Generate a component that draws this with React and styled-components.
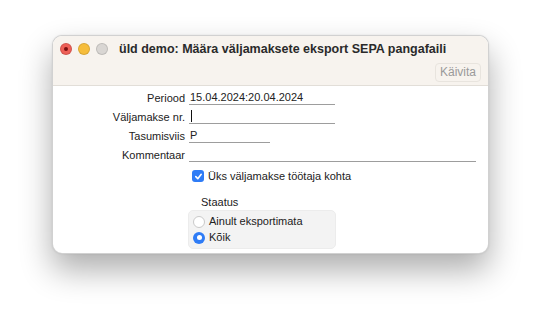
import styled, {createGlobalStyle} from 'styled-components'

const GlobalStyle = createGlobalStyle`
  body {
    margin: 0;
    background: #ffffff;
    font-family: 'Liberation Sans', Arial, sans-serif;
  }
`

const Page = styled.div`
  width: 542px;
  height: 324px;
  padding: 35px 0 0 52px;
  box-sizing: border-box;
`

const Window = styled.div`
  width: 437px;
  height: 219px;
  border-radius: 10px;
  border: 1px solid rgba(0, 0, 0, 0.18);
  box-sizing: border-box;
  overflow: hidden;
  background: #ffffff;
  box-shadow: 0 16px 32px rgba(0, 0, 0, 0.32), 0 0 2px rgba(0, 0, 0, 0.1);
  display: flex;
  flex-direction: column;
`

const Header = styled.div`
  height: 50px;
  background: #f7f3ee;
  border-bottom: 1px solid #e2ded8;
  display: flex;
  flex-direction: column;
  padding: 6px 7px 0 7px;
  box-sizing: border-box;
`

const TitleRow = styled.div`
  display: flex;
  align-items: center;
  gap: 6px;
  height: 14px;
`

const Light = styled.span`
  width: 12px;
  height: 12px;
  border-radius: 50%;
  background: ${p => p.color};
  border: 0.5px solid rgba(0, 0, 0, 0.12);
  box-sizing: border-box;
  display: flex;
  align-items: center;
  justify-content: center;
`

const Dot = styled.span`
  width: 4px;
  height: 4px;
  border-radius: 50%;
  background: #7a1010;
`

const Title = styled.span`
  margin-left: 5px;
  font-size: 12.5px;
  font-weight: bold;
  color: #2a2a2a;
`

const Toolbar = styled.div`
  display: flex;
  justify-content: flex-end;
  margin-top: 7px;
`

const ToolButton = styled.button`
  font-family: inherit;
  font-size: 12px;
  color: #9a9a9a;
  background: #f7f3ee;
  border: 1px solid #e8e4de;
  border-radius: 4px;
  padding: 2px 4px;
  height: 19px;
  line-height: 13px;
`

const Body = styled.div`
  flex: 1;
  padding-top: 5px;
  display: flex;
  flex-direction: column;
  font-size: 11px;
  color: #222;
`

const Form = styled.div`
  display: grid;
  grid-template-columns: 132px 1fr;
  column-gap: 4px;
  row-gap: 5px;
  padding-right: 13px;
  align-items: end;
`

const Label = styled.span`
  text-align: right;
  line-height: 14px;
`

const Field = styled.span`
  display: block;
  width: ${p => p.w || '100%'};
  border-bottom: 1px solid #9d9d9d;
  line-height: 13px;
  height: 13px;
  padding-left: 1px;
`

const Caret = styled.span`
  display: inline-block;
  width: 1px;
  height: 12px;
  background: #111;
  vertical-align: top;
  margin-left: 1px;
`

const Options = styled.div`
  padding-left: 135px;
  margin-top: 8px;
  display: flex;
  flex-direction: column;
`

const CheckRow = styled.div`
  display: flex;
  align-items: center;
  gap: 4px;
  padding-left: 4px;
`

const Check = styled.span`
  width: 12px;
  height: 12px;
  border-radius: 3px;
  background: #2f7cf6;
  display: flex;
  align-items: center;
  justify-content: center;
`

const GroupTitle = styled.div`
  margin: 14px 0 0 13px;
  line-height: 13px;
`

const Group = styled.div`
  width: 148px;
  margin-top: 1px;
  background: #f3f3f3;
  border: 1px solid #ececec;
  border-radius: 5px;
  box-sizing: border-box;
  padding: 4px 4px 4px 4px;
  display: flex;
  flex-direction: column;
  gap: 3px;
`

const RadioRow = styled.div`
  display: flex;
  align-items: center;
  gap: 4px;
  line-height: 13px;
`

const Radio = styled.span`
  width: 12px;
  height: 12px;
  border-radius: 50%;
  box-sizing: border-box;
  background: ${p => (p.on ? '#2f7cf6' : '#ffffff')};
  border: ${p => (p.on ? 'none' : '1px solid #c9c9c9')};
  display: flex;
  align-items: center;
  justify-content: center;
  &::after {
    content: '';
    display: ${p => (p.on ? 'block' : 'none')};
    width: 5px;
    height: 5px;
    border-radius: 50%;
    background: #fff;
  }
`

export default function App() {
  return (
    <>
      <GlobalStyle />
      <Page>
        <Window>
          <Header>
            <TitleRow>
              <Light color="#ee5f57">
                <Dot />
              </Light>
              <Light color="#f6bd3b" />
              <Light color="#d9d6d3" />
              <Title>üld demo: Määra väljamaksete eksport SEPA pangafaili</Title>
            </TitleRow>
            <Toolbar>
              <ToolButton type="button">Käivita</ToolButton>
            </Toolbar>
          </Header>
          <Body>
            <Form>
              <Label>Periood</Label>
              <Field w="145px">15.04.2024:20.04.2024</Field>
              <Label>Väljamakse nr.</Label>
              <Field w="145px">
                <Caret />
              </Field>
              <Label>Tasumisviis</Label>
              <Field w="80px">P</Field>
              <Label>Kommentaar</Label>
              <Field />
            </Form>
            <Options>
              <CheckRow>
                <Check>
                  <svg width="9" height="9" viewBox="0 0 10 10">
                    <path
                      d="M2 5.2 L4.2 7.4 L8 2.6"
                      fill="none"
                      stroke="#fff"
                      strokeWidth="1.8"
                      strokeLinecap="round"
                      strokeLinejoin="round"
                    />
                  </svg>
                </Check>
                Üks väljamakse töötaja kohta
              </CheckRow>
              <GroupTitle>Staatus</GroupTitle>
              <Group>
                <RadioRow>
                  <Radio />
                  Ainult eksportimata
                </RadioRow>
                <RadioRow>
                  <Radio on />
                  Kõik
                </RadioRow>
              </Group>
            </Options>
          </Body>
        </Window>
      </Page>
    </>
  )
}
